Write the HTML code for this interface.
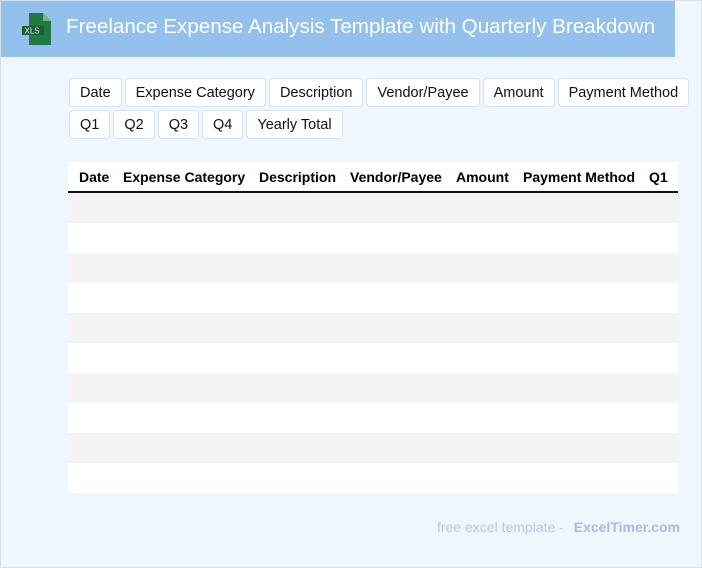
<!DOCTYPE html>
<html><head><style>
*{box-sizing:border-box;margin:0;padding:0}
body{width:702px;height:568px;background:#f0f6fe;font-family:"Liberation Sans",sans-serif;position:relative;overflow:hidden}
.frame{position:absolute;left:0;top:0;width:702px;height:568px;border:1px solid #d6dee8;pointer-events:none}
.hdr{position:absolute;left:0;top:0;width:675px;height:57px;background:#93c0ec}
.hdr h1{position:absolute;left:66px;top:15px;font-size:20.6px;font-weight:normal;color:#fff;white-space:nowrap}
.ic{position:absolute;left:21px;top:13px}
.btns{position:absolute;left:69px;top:78px;width:640px}
.b{display:inline-block;height:29px;line-height:29px;padding:0 10px;border:1px solid #d8e2ee;border-radius:4px;background:#fff;font-size:14.5px;color:#111;margin:0 0 3px 0;float:left;margin-right:3px}
.tbl{position:absolute;left:68px;top:162px;width:610px;height:331px;overflow:hidden;background:#fff}
.th{height:31px;border-bottom:2px solid #111;position:relative;font-weight:bold;font-size:14px;background:#fff}
.th span{position:absolute;top:7px;white-space:nowrap}
.r{height:30px}
.ft{position:absolute;top:519px;left:437px;font-size:14px;color:#b6c6ee;white-space:nowrap}
.ft b{color:#a6bbed;margin-left:6px}
</style></head><body>
<div class="hdr">
<svg class="ic" width="31" height="32" viewBox="0 0 31 32"><path d="M8 0h14l8 8v24H8z" fill="#1f7a44"/><path d="M22 0v8h8z" fill="#6fb58a"/><rect x="1" y="13" width="22" height="9" fill="#155f33"/><text x="3.5" y="20.5" font-size="8" fill="#fff" font-family="Liberation Sans">XLS</text></svg>
<h1>Freelance Expense Analysis Template with Quarterly Breakdown</h1>
</div>
<div class="btns">
<div class="b">Date</div><div class="b">Expense Category</div><div class="b">Description</div><div class="b">Vendor/Payee</div><div class="b">Amount</div><div class="b">Payment Method</div>
<div style="clear:both"></div>
<div class="b">Q1</div><div class="b">Q2</div><div class="b">Q3</div><div class="b">Q4</div><div class="b">Yearly Total</div>
</div>
<div class="tbl">
<div class="th"><span style="left:11px">Date</span><span style="left:55px">Expense Category</span><span style="left:191px">Description</span><span style="left:282px">Vendor/Payee</span><span style="left:388px">Amount</span><span style="left:455px">Payment Method</span><span style="left:581px">Q1</span></div>
<div>
<div class="r" style="background:#f4f4f4"></div><div class="r" style="background:#fff"></div><div class="r" style="background:#f4f4f4"></div><div class="r" style="background:#fff"></div><div class="r" style="background:#f4f4f4"></div><div class="r" style="background:#fff"></div><div class="r" style="background:#f4f4f4"></div><div class="r" style="background:#fff"></div><div class="r" style="background:#f4f4f4"></div><div class="r" style="background:#fff"></div>
</div>
</div>
<div class="ft">free excel template - <b>ExcelTimer.com</b></div>
<div class="frame"></div>
</body></html>
